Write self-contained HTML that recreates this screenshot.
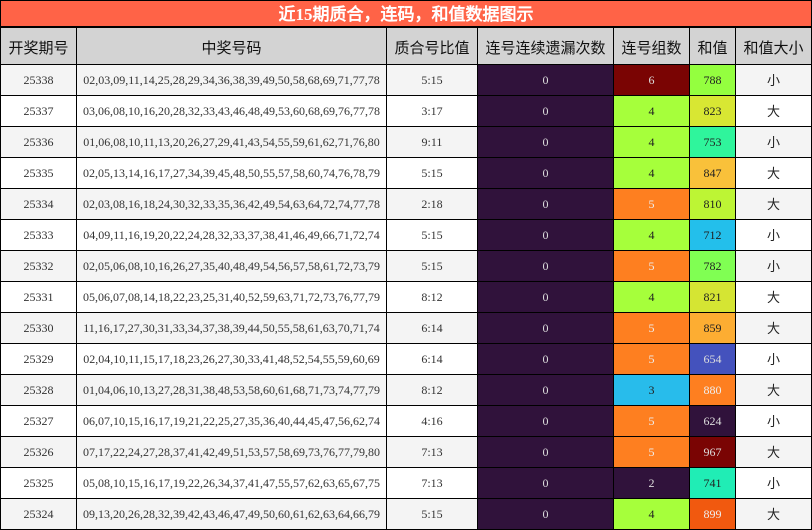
<!DOCTYPE html>
<html><head><meta charset="utf-8"><style>
html,body{margin:0;padding:0;background:#fff;width:812px;height:530px;overflow:hidden}
body{font-family:"Liberation Serif","WenQuanYi Zen Hei",serif;color:#333}
.t{position:absolute;left:0;top:0;width:812px;height:28px;box-sizing:border-box;background:#ff6347;border:1px solid #000;border-bottom:2px solid #000;color:#fff;font-weight:bold;font-size:17px;line-height:27px;text-align:center}
table{position:absolute;left:0;top:28px;border-collapse:separate;border-spacing:0;table-layout:fixed;width:812px;border-left:1px solid #000}
td,th{box-sizing:border-box;border-right:1px solid #000;border-bottom:1px solid #000;padding:0;text-align:center;font-size:12px;height:31px;overflow:hidden;white-space:nowrap;font-weight:normal}
th{height:37px;background:#d3d3d3;font-size:15px;color:#111;padding-top:2px}
tr:nth-child(even) td{background:#f4f4f4}
tr:nth-child(odd) td{background:#fff}
td.z{font-size:13px;color:#222;padding-bottom:2px}
td.p{background:#30123b!important;color:#ddd}
td.m{background:#7a0403!important;color:#ddd}
td.g{background:#a6ff3b!important;color:#222}
td.o{background:#fe7f20!important;color:#eee}
td.b{background:#28bceb!important;color:#222}
</style></head><body>
<div class="t">近15期质合，连码，和值数据图示</div>
<table><colgroup><col style="width:76px"><col style="width:310px"><col style="width:91px"><col style="width:136px"><col style="width:76px"><col style="width:46px"><col style="width:76px"></colgroup>
<tbody>
<tr><th>开奖期号</th><th>中奖号码</th><th>质合号比值</th><th>连号连续遗漏次数</th><th>连号组数</th><th>和值</th><th>和值大小</th></tr>
<tr><td>25338</td><td>02,03,09,11,14,25,28,29,34,36,38,39,49,50,58,68,69,71,77,78</td><td>5:15</td><td class="p">0</td><td class="m">6</td><td style="background:#94ff3f!important;color:#222">788</td><td class="z">小</td></tr>
<tr><td>25337</td><td>03,06,08,10,16,20,28,32,33,43,46,48,49,53,60,68,69,76,77,78</td><td>3:17</td><td class="p">0</td><td class="g">4</td><td style="background:#d8e733!important;color:#222">823</td><td class="z">大</td></tr>
<tr><td>25336</td><td>01,06,08,10,11,13,20,26,27,29,41,43,54,55,59,61,62,71,76,80</td><td>9:11</td><td class="p">0</td><td class="g">4</td><td style="background:#2ff59c!important;color:#222">753</td><td class="z">小</td></tr>
<tr><td>25335</td><td>02,05,13,14,16,17,27,34,39,45,48,50,55,57,58,60,74,76,78,79</td><td>5:15</td><td class="p">0</td><td class="g">4</td><td style="background:#f9c13a!important;color:#222">847</td><td class="z">大</td></tr>
<tr><td>25334</td><td>02,03,08,16,18,24,30,32,33,35,36,42,49,54,63,64,72,74,77,78</td><td>2:18</td><td class="p">0</td><td class="o">5</td><td style="background:#bdf534!important;color:#222">810</td><td class="z">大</td></tr>
<tr><td>25333</td><td>04,09,11,16,19,20,22,24,28,32,33,37,38,41,46,49,66,71,72,74</td><td>5:15</td><td class="p">0</td><td class="g">4</td><td style="background:#23bfeb!important;color:#222">712</td><td class="z">小</td></tr>
<tr><td>25332</td><td>02,05,06,08,10,16,26,27,35,40,48,49,54,56,57,58,61,72,73,79</td><td>5:15</td><td class="p">0</td><td class="o">5</td><td style="background:#80ff53!important;color:#222">782</td><td class="z">小</td></tr>
<tr><td>25331</td><td>05,06,07,08,14,18,22,23,25,31,40,52,59,63,71,72,73,76,77,79</td><td>8:12</td><td class="p">0</td><td class="g">4</td><td style="background:#d5e533!important;color:#222">821</td><td class="z">大</td></tr>
<tr><td>25330</td><td>11,16,17,27,30,31,33,34,37,38,39,44,50,55,58,61,63,70,71,74</td><td>6:14</td><td class="p">0</td><td class="o">5</td><td style="background:#fdad32!important;color:#222">859</td><td class="z">大</td></tr>
<tr><td>25329</td><td>02,04,10,11,15,17,18,23,26,27,30,33,41,48,52,54,55,59,60,69</td><td>6:14</td><td class="p">0</td><td class="o">5</td><td style="background:#4452bd!important;color:#ddd">654</td><td class="z">小</td></tr>
<tr><td>25328</td><td>01,04,06,10,13,27,28,31,38,48,53,58,60,61,68,71,73,74,77,79</td><td>8:12</td><td class="p">0</td><td class="b">3</td><td class="o">880</td><td class="z">大</td></tr>
<tr><td>25327</td><td>06,07,10,15,16,17,19,21,22,25,27,35,36,40,44,45,47,56,62,74</td><td>4:16</td><td class="p">0</td><td class="o">5</td><td class="p">624</td><td class="z">小</td></tr>
<tr><td>25326</td><td>07,17,22,24,27,28,37,41,42,49,51,53,57,58,69,73,76,77,79,80</td><td>7:13</td><td class="p">0</td><td class="o">5</td><td class="m">967</td><td class="z">大</td></tr>
<tr><td>25325</td><td>05,08,10,15,16,17,19,22,26,34,37,41,47,55,57,62,63,65,67,75</td><td>7:13</td><td class="p">0</td><td class="p">2</td><td style="background:#20edb5!important;color:#222">741</td><td class="z">小</td></tr>
<tr><td>25324</td><td>09,13,20,26,28,32,39,42,43,46,47,49,50,60,61,62,63,64,66,79</td><td>5:15</td><td class="p">0</td><td class="g">4</td><td style="background:#f1590f!important;color:#eee">899</td><td class="z">大</td></tr>
</tbody></table>
</body></html>
